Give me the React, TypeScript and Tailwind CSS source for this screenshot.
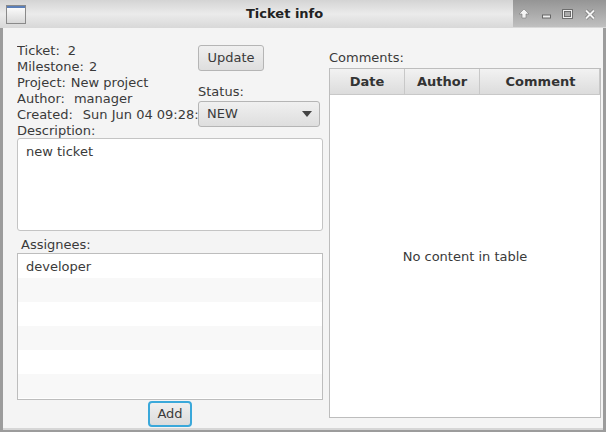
import React from "react";

const font = { fontFamily: '"DejaVu Sans", sans-serif' };

function Header({ label, className }: { label: string; className: string }) {
  return (
    <div className={`flex items-center justify-center h-full border-r border-[#c8c8c8] bg-gradient-to-b from-[#f2f2f2] to-[#dcdcdc] text-[13px] font-bold text-[#333] ${className}`}>
      {label}
    </div>
  );
}

function InfoLine({ label, value, gap }: { label: string; value?: string; gap?: string }) {
  return (
    <div className="h-4 leading-4 whitespace-nowrap">
      <span>{label}</span>
      {value ? <span className={gap}>{value}</span> : null}
    </div>
  );
}

export default function App() {
  return (
    <div style={font} className="w-[606px] h-[432px] overflow-hidden flex flex-col bg-[#9c9c9c] text-[13px] text-[#3a3a3a] antialiased">
      <div className="h-[28px] shrink-0 flex items-stretch bg-gradient-to-b from-[#d4d4d4] via-[#ebebeb] to-[#d8d8d8]">
        <div className="flex-1 flex items-center pl-[6px] relative">
          <div className="w-[20px] h-[19px] border border-[#8a8a8a] bg-gradient-to-b from-[#ffffff] to-[#d8d8d8]">
            <div className="h-[2px] bg-[#5b7fb8]" />
          </div>
          <span className="absolute left-[246px] top-[6px] text-[13px] leading-4 font-bold text-[#222]">Ticket info</span>
        </div>
        <div className="w-[93px] h-[27px] bg-gradient-to-b from-[#959595] to-[#c0c0c0]">
          <svg width="93" height="27" viewBox="0 0 93 27">
            <path d="M11 9l5 5h-3v4h-4v-4H6z" fill="#f4f4f4" stroke="#7a7a7a" strokeWidth="0.6" />
            <rect x="29.5" y="15" width="8" height="3" fill="#f0f0f0" stroke="#666666" strokeWidth="1" />
            <rect x="50.5" y="10.5" width="8" height="7" fill="none" stroke="#666666" strokeWidth="2.8" />
            <rect x="50.5" y="10.5" width="8" height="7" fill="none" stroke="#f0f0f0" strokeWidth="1" />
            <path d="M73 10.5l8 8m0-8l-8 8" stroke="#777777" strokeWidth="3.4" />
            <path d="M73 10.5l8 8m0-8l-8 8" stroke="#f4f4f4" strokeWidth="2" />
          </svg>
        </div>
      </div>

      <div className="h-[402px] shrink-0 mx-[3px] bg-[#f4f4f4] border-b-2 border-[#d6d6d6] flex">
        <div className="w-[320px] shrink-0 pl-[14px] flex flex-col">
          <div className="flex pt-[15px] h-[110px] shrink-0">
            <div className="w-[181px] overflow-hidden">
              <InfoLine label="Ticket:" value="2" gap="ml-[8px]" />
              <InfoLine label="Milestone:" value="2" gap="ml-[5px]" />
              <InfoLine label="Project:" value="New project" gap="ml-[5px]" />
              <InfoLine label="Author:" value="manager" gap="ml-[9px]" />
              <InfoLine label="Created:" value="Sun Jun 04 09:28:" gap="ml-[10px]" />
              <InfoLine label="Description:" />
            </div>
            <div className="w-[122px] mt-[2px]">
              <div className="w-[66px] h-[26px] flex items-center justify-center rounded-[3px] border border-[#b5b5b5] bg-gradient-to-b from-[#f0f0f0] to-[#dedede]">Update</div>
              <div className="mt-[13px] h-4 leading-4 mb-[1px]">Status:</div>
              <div className="h-[26px] flex items-center justify-between pl-[8px] pr-[7px] rounded-[3px] border border-[#b5b5b5] bg-gradient-to-b from-[#f0f0f0] to-[#dedede]">
                <span>NEW</span>
                <svg width="10" height="6" viewBox="0 0 10 6"><path d="M0 0h10L5 6z" fill="#444" /></svg>
              </div>
            </div>
          </div>
          <div className="w-[306px] h-[93px] shrink-0 rounded-[3px] border border-[#c4c4c4] bg-white px-[8px] pt-[5px] leading-4">new ticket</div>
          <div className="mt-[6px] pl-[4px] h-4 leading-4">Assignees:</div>
          <div className="w-[306px] h-[147px] shrink-0 border border-[#bdbdbd] bg-white flex flex-col overflow-hidden">
            <div className="h-[24px] shrink-0 bg-white pl-[8px] pt-[5px] leading-4">developer</div>
            <div className="h-[24px] shrink-0 bg-[#f8f8f8]" />
            <div className="h-[24px] shrink-0 bg-white" />
            <div className="h-[24px] shrink-0 bg-[#f8f8f8]" />
            <div className="h-[24px] shrink-0 bg-white" />
            <div className="h-[24px] shrink-0 bg-[#f8f8f8]" />
          </div>
          <div className="w-[306px] flex justify-center pt-[1px]">
            <div className="w-[44px] h-[26px] flex items-center justify-center rounded-[4px] border-2 border-[#3aa8da] bg-gradient-to-b from-[#efefef] to-[#dcdcdc]">Add</div>
          </div>
        </div>

        <div className="w-[272px] shrink-0 ml-[6px] flex flex-col pt-[22px]">
          <div className="h-4 leading-4 mb-[2px]">Comments:</div>
          <div className="w-[272px] h-[350px] shrink-0 border border-[#bdbdbd] bg-white flex flex-col">
            <div className="h-[26px] shrink-0 flex border-b border-[#c8c8c8]">
              <Header label="Date" className="w-[75px]" />
              <Header label="Author" className="w-[75px]" />
              <Header label="Comment" className="flex-1 pl-[2px]" />
            </div>
            <div className="flex-1 flex items-center justify-center pt-[1px]">No content in table</div>
          </div>
        </div>
      </div>
    </div>
  );
}
